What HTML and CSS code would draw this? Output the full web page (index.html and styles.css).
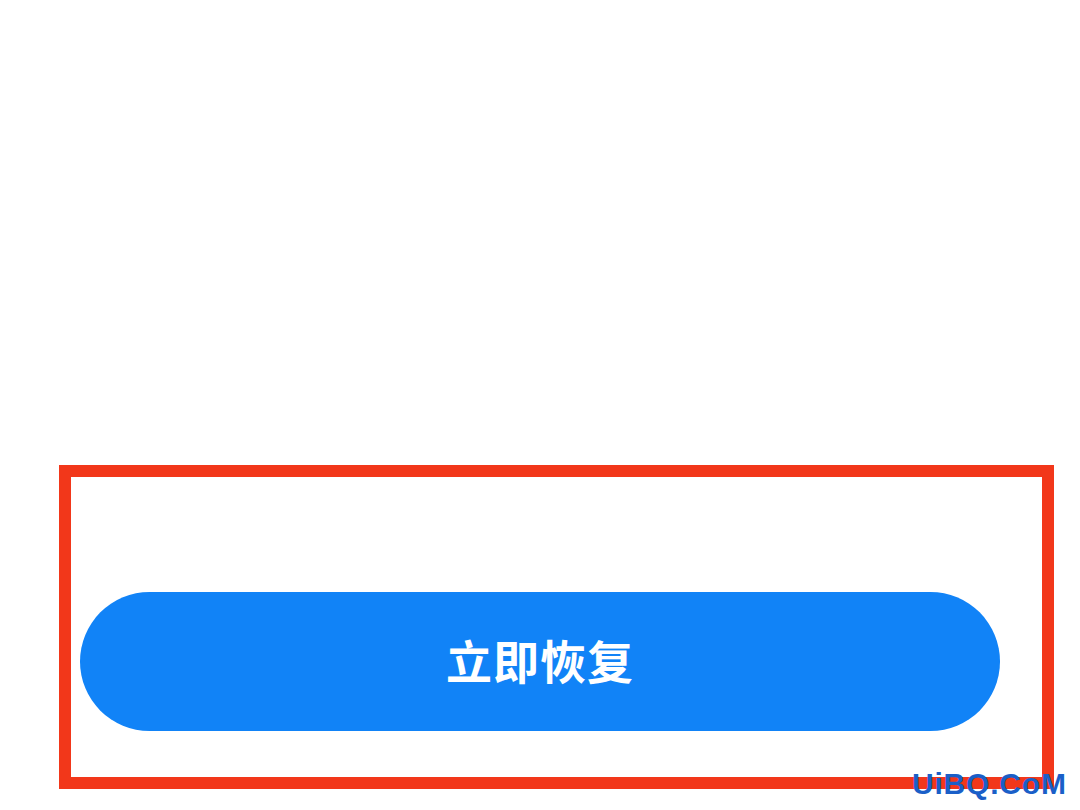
FILE: index.html
```html
<!DOCTYPE html>
<html lang="zh-CN">
<head>
<meta charset="utf-8">
<link rel="stylesheet" href="styles.css">
</head>
<body>
<div class="page">
  <div class="highlight">
    <button class="restore-btn">立即恢复</button>
  </div>
  <div class="watermark">UiBQ.CoM</div>
</div>
</body>
</html>
```
FILE: styles.css
```css
html, body {
  margin: 0;
  padding: 0;
  background: #ffffff;
}
.page {
  position: relative;
  width: 1080px;
  height: 810px;
  overflow: hidden;
  padding-top: 465px;
  box-sizing: border-box;
}
.highlight {
  margin-left: 59px;
  width: 995px;
  height: 324px;
  box-sizing: border-box;
  border: 12px solid #f2371a;
  padding: 115px 0 0 9px;
}
.restore-btn {
  display: flex;
  align-items: center;
  justify-content: center;
  width: 920px;
  height: 139px;
  border: none;
  border-radius: 70px;
  background: #1183f7;
  color: #ffffff;
  font-family: "Noto Sans CJK SC", "Noto Sans", sans-serif;
  font-weight: 700;
  font-size: 46px;
  letter-spacing: 1px;
  padding: 0 0 6px 0;
  margin: 0;
}
.watermark {
  position: absolute;
  left: 912px;
  top: 766px;
  font-family: "Liberation Sans", "DejaVu Sans", sans-serif;
  font-weight: 700;
  font-size: 30px;
  line-height: 36px;
  letter-spacing: 0.8px;
  color: #1a5fc8;
}
```
